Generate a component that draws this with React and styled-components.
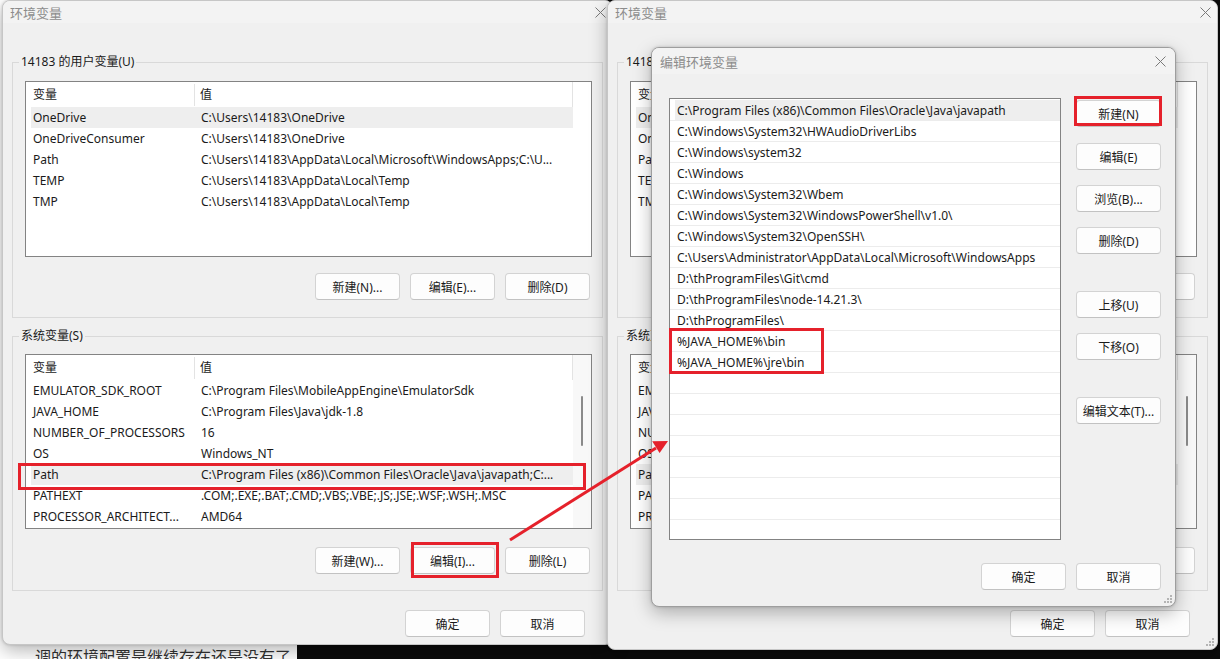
import React from "react";
import styled, { createGlobalStyle } from "styled-components";

const RED = "#e5212b";

const GlobalStyle = createGlobalStyle`
  html, body { margin: 0; padding: 0; background: #0b0b0b; }
  body {
    font-family: "Noto Sans", "Noto Sans CJK SC", sans-serif;
    font-size: 12px;
    color: #1a1a1a;
  }
  * { box-sizing: border-box; }
`;

const Desktop = styled.div`
  position: relative;
  width: 1220px;
  height: 659px;
  overflow: hidden;
  background: #0b0b0b;
  display: flex;
`;

const Article = styled.div`
  width: 297px;
  background: #fff;
  display: flex;
  align-items: flex-end;
  padding-left: 35px;
`;

const Caption = styled.p`
  margin: 0 0 -8px;
  font-size: 16px;
  line-height: 20px;
  color: #333;
  white-space: nowrap;
`;

// a window on the desktop canvas: its place is the content
const Win = styled.section`
  position: absolute;
  left: ${(p) => p.$x}px;
  top: ${(p) => p.$y}px;
  width: ${(p) => p.$w}px;
  height: ${(p) => p.$h}px;
  background: #f0f0f0;
  border: 1px solid ${(p) => p.$edge || "#c6c6c6"};
  border-radius: 8px;
  box-shadow: 0 6px 18px rgba(0, 0, 0, 0.28), 0 0 3px rgba(0, 0, 0, 0.18);
  display: flex;
  flex-direction: column;
  overflow: hidden;
`;

const TitleBar = styled.header`
  flex: none;
  height: ${(p) => p.$h}px;
  display: flex;
  align-items: center;
  justify-content: space-between;
  padding: 0 ${(p) => p.$pr}px 0 ${(p) => p.$pl}px;
  background: #f3f3f3;
  font-size: 13px;
  color: #8c8c8c;
`;

const EnvBody = styled.div`
  display: flex;
  flex-direction: column;
  padding: 31px 9px 0;
`;

const Group = styled.fieldset`
  margin: ${(p) => p.$mt || 0}px 0 0;
  padding: ${(p) => p.$pt}px 10px ${(p) => p.$pb}px 12px;
  border: 1px solid #d9d9d9;
  min-width: 0;
`;

const Legend = styled.legend`
  margin-left: -6px;
  padding: 0 2px;
  font-size: 12px;
  line-height: 16px;
  color: #1a1a1a;
`;

const ListBox = styled.div`
  height: ${(p) => p.$h}px;
  border: 1px solid #838383;
  background: #fff;
  display: flex;
  overflow: hidden;
`;

const Table = styled.div`
  flex: 1;
  min-width: 0;
`;

const ScrollCol = styled.div`
  flex: none;
  width: 18px;
  background: ${(p) => (p.$scroll ? "#f8f8f8" : "#fff")};
`;

const Thumb = styled.div`
  width: 2px;
  height: 50px;
  margin: 41px 0 0 8px;
  border-radius: 1px;
  background: #8a8a8a;
`;

const HeadRow = styled.div`
  display: grid;
  grid-template-columns: 162px 1fr;
  align-items: center;
  height: 25px;
  margin-left: 5px;
  padding-left: 2px;
  border-right: 1px solid #e3e3e3;
`;

const HeadCell = styled.div`
  height: 22px;
  line-height: 22px;
  padding-left: ${(p) => (p.$sep ? 0 : 5)}px;
  border-right: ${(p) => (p.$sep ? "1px solid #e3e3e3" : "none")};
`;

const Row = styled.div`
  display: grid;
  grid-template-columns: 168px 1fr;
  align-items: center;
  height: 21px;
  margin-left: 5px;
  padding-left: 2px;
  background: ${(p) => (p.$sel ? "#eeeeee" : "transparent")};
  white-space: nowrap;
  overflow: hidden;
`;

const ButtonRow = styled.div`
  display: flex;
  justify-content: flex-end;
  gap: 10px;
  margin-top: ${(p) => p.$mt}px;
  padding-right: ${(p) => p.$pr || 0}px;
`;

const Btn = styled.button`
  flex: none;
  width: 85px;
  height: 27px;
  margin-top: ${(p) => p.$mt || 0}px;
  padding: 0;
  font: inherit;
  font-size: 12px;
  color: #1a1a1a;
  background: #fdfdfd;
  border: 1px solid #d3d3d3;
  border-bottom-color: #c2c2c2;
  border-radius: 4px;
`;

const EditBody = styled.div`
  display: flex;
  flex-direction: column;
  padding: 24px 14px 0 17px;
`;

const EditMain = styled.div`
  display: flex;
  gap: 15px;
`;

const PathList = styled.div`
  width: 392px;
  height: 442px;
  padding-top: 1px;
  border: 1px solid #838383;
  background: #fff;
  overflow: hidden;
`;

const PathRow = styled.div`
  display: flex;
  height: 21px;
  border-bottom: 1px solid #ececec;
`;

const PathEntry = styled.div`
  flex: 1;
  display: flex;
  align-items: center;
  margin-left: 5px;
  padding-left: 2px;
  background: ${(p) => (p.$sel ? "#eeeeee" : "transparent")};
  white-space: nowrap;
`;

const SideCol = styled.div`
  display: flex;
  flex-direction: column;
  padding-top: 2px;
`;

const Grip = styled.svg`
  position: absolute;
  right: 3px;
  bottom: 3px;
`;

const Overlay = styled.svg`
  position: absolute;
  left: 0;
  top: 0;
  pointer-events: none;
`;

const CloseIcon = () => (
  <svg width="11" height="11" viewBox="0 0 11 11">
    <path d="M0.5 0.5L10.5 10.5M10.5 0.5L0.5 10.5" stroke="#7a7a7a" strokeWidth="1" fill="none" />
  </svg>
);

const GripIcon = () => (
  <Grip width="9" height="9" viewBox="0 0 9 9">
    {[[7, 1], [4, 4], [7, 4], [1, 7], [4, 7], [7, 7]].map(([x, y]) => (
      <rect key={`${x}-${y}`} x={x} y={y} width="2" height="2" fill="#b4b4b4" />
    ))}
  </Grip>
);

const userVars = [
  ["OneDrive", "C:\\Users\\14183\\OneDrive", true],
  ["OneDriveConsumer", "C:\\Users\\14183\\OneDrive"],
  ["Path", "C:\\Users\\14183\\AppData\\Local\\Microsoft\\WindowsApps;C:\\U..."],
  ["TEMP", "C:\\Users\\14183\\AppData\\Local\\Temp"],
  ["TMP", "C:\\Users\\14183\\AppData\\Local\\Temp"],
];

const sysVars = [
  ["EMULATOR_SDK_ROOT", "C:\\Program Files\\MobileAppEngine\\EmulatorSdk"],
  ["JAVA_HOME", "C:\\Program Files\\Java\\jdk-1.8"],
  ["NUMBER_OF_PROCESSORS", "16"],
  ["OS", "Windows_NT"],
  ["Path", "C:\\Program Files (x86)\\Common Files\\Oracle\\Java\\javapath;C:...", true],
  ["PATHEXT", ".COM;.EXE;.BAT;.CMD;.VBS;.VBE;.JS;.JSE;.WSF;.WSH;.MSC"],
  ["PROCESSOR_ARCHITECT...", "AMD64"],
];

const paths = [
  "C:\\Program Files (x86)\\Common Files\\Oracle\\Java\\javapath",
  "C:\\Windows\\System32\\HWAudioDriverLibs",
  "C:\\Windows\\system32",
  "C:\\Windows",
  "C:\\Windows\\System32\\Wbem",
  "C:\\Windows\\System32\\WindowsPowerShell\\v1.0\\",
  "C:\\Windows\\System32\\OpenSSH\\",
  "C:\\Users\\Administrator\\AppData\\Local\\Microsoft\\WindowsApps",
  "D:\\thProgramFiles\\Git\\cmd",
  "D:\\thProgramFiles\\node-14.21.3\\",
  "D:\\thProgramFiles\\",
  "%JAVA_HOME%\\bin",
  "%JAVA_HOME%\\jre\\bin",
];

const VarList = ({ rows, height, scroll }) => (
  <ListBox $h={height}>
    <Table>
      <HeadRow>
        <HeadCell $sep>变量</HeadCell>
        <HeadCell>值</HeadCell>
      </HeadRow>
      {rows.map(([name, value, sel]) => (
        <Row key={name + value} $sel={sel}>
          <span>{name}</span>
          <span>{value}</span>
        </Row>
      ))}
    </Table>
    <ScrollCol $scroll={scroll}>{scroll && <Thumb />}</ScrollCol>
  </ListBox>
);

const EnvWindow = ({ x, h, grip }) => (
  <Win $x={x} $y={0} $w={611} $h={h}>
    <TitleBar $h={22} $pl={7} $pr={6}>
      <span>环境变量</span>
      <CloseIcon />
    </TitleBar>
    <EnvBody>
      <Group $pt={11} $pb={17}>
        <Legend>14183 的用户变量(U)</Legend>
        <VarList rows={userVars} height={176} />
        <ButtonRow $mt={16} $pr={2}>
          <Btn>新建(N)...</Btn>
          <Btn>编辑(E)...</Btn>
          <Btn>删除(D)</Btn>
        </ButtonRow>
      </Group>
      <Group $mt={10} $pt={10} $pb={16}>
        <Legend>系统变量(S)</Legend>
        <VarList rows={sysVars} height={175} scroll />
        <ButtonRow $mt={18} $pr={2}>
          <Btn>新建(W)...</Btn>
          <Btn>编辑(I)...</Btn>
          <Btn>删除(L)</Btn>
        </ButtonRow>
      </Group>
      <ButtonRow $mt={19} $pr={18}>
        <Btn>确定</Btn>
        <Btn>取消</Btn>
      </ButtonRow>
    </EnvBody>
    {grip && <GripIcon />}
  </Win>
);

const EditWindow = () => {
  const rows = [...paths, ...Array(8).fill("")];
  return (
    <Win $x={651} $y={47} $w={525} $h={560} $edge="#9e9e9e">
      <TitleBar $h={26} $pl={8} $pr={9}>
        <span>编辑环境变量</span>
        <CloseIcon />
      </TitleBar>
      <EditBody>
        <EditMain>
          <PathList>
            {rows.map((p, i) => (
              <PathRow key={i}>
                <PathEntry $sel={i === 0}>{p}</PathEntry>
              </PathRow>
            ))}
          </PathList>
          <SideCol>
            <Btn>新建(N)</Btn>
            <Btn $mt={16}>编辑(E)</Btn>
            <Btn $mt={15}>浏览(B)...</Btn>
            <Btn $mt={15}>删除(D)</Btn>
            <Btn $mt={37}>上移(U)</Btn>
            <Btn $mt={15}>下移(O)</Btn>
            <Btn $mt={37}>编辑文本(T)...</Btn>
          </SideCol>
        </EditMain>
        <ButtonRow $mt={23}>
          <Btn>确定</Btn>
          <Btn>取消</Btn>
        </ButtonRow>
      </EditBody>
      <GripIcon />
    </Win>
  );
};

const Annotations = () => (
  <Overlay width="1220" height="659" viewBox="0 0 1220 659">
    <g fill="none" stroke={RED} strokeWidth="3">
      <rect x="19.5" y="464.5" width="565" height="24" />
      <rect x="412.5" y="543.5" width="85" height="33" />
      <rect x="1075.5" y="97.5" width="85" height="27" />
      <rect x="670.5" y="329.5" width="152" height="43" />
      <line x1="510" y1="540" x2="656" y2="448" />
    </g>
    <polygon points="668,441 659.6,453.1 652.2,441.2" fill={RED} />
  </Overlay>
);

export default function App() {
  return (
    <>
      <GlobalStyle />
      <Desktop>
        <Article>
          <Caption>调的环境配置是继续存在还是没有了</Caption>
        </Article>
        <EnvWindow x={2} h={645} />
        <EnvWindow x={607} h={650} grip />
        <EditWindow />
        <Annotations />
      </Desktop>
    </>
  );
}
